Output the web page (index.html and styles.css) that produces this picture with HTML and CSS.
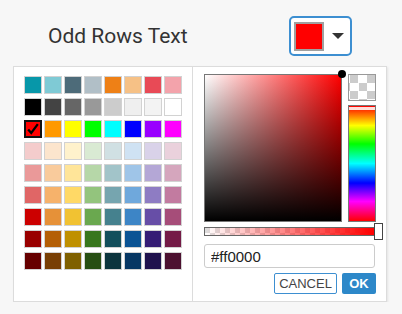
FILE: index.html
```html
<!DOCTYPE html>
<html lang="en">
<head>
    <meta charset="UTF-8">
    <meta name="viewport" content="width=device-width, initial-scale=1.0">
    <title>Color Picker</title>
    <link rel="stylesheet" href="styles.css">
</head>
<body>
    <div class="field">
        <span class="label">Odd Rows Text</span>
        <button class="picker-btn">
            <span class="current"></span>
            <span class="caret"></span>
        </button>
    </div>
    <div class="popup">
        <div class="palette" id="palette"></div>
        <div class="custom">
            <div class="editor">
                <div class="square"><span class="dot"></span></div>
                <div class="side">
                    <div class="checker"></div>
                    <div class="hue"><span class="hue-handle"></span></div>
                </div>
            </div>
            <div class="alpha"><span class="alpha-handle"></span></div>
            <input type="text" class="hex" value="#ff0000">
            <div class="actions">
                <button class="btn cancel">CANCEL</button>
                <button class="btn ok">OK</button>
            </div>
        </div>
    </div>

    <script>
        const colors = [
            "#0797a9", "#7fcad5", "#4d6b79", "#b1bfc7", "#ee8016", "#f6c186", "#e84a56", "#f3a3ab",
            "#000000", "#434343", "#666666", "#999999", "#cccccc", "#efefef", "#f3f3f3", "#ffffff",
            "#ff0000", "#ff9900", "#ffff00", "#00ff00", "#00ffff", "#0000ff", "#9900ff", "#ff00ff",
            "#f4cccc", "#fce5cd", "#fff2cc", "#d9ead3", "#d0e0e3", "#cfe2f3", "#d9d2e9", "#ead1dc",
            "#ea9999", "#f9cb9c", "#ffe599", "#b6d7a8", "#a2c4c9", "#9fc5e8", "#b4a7d6", "#d5a6bd",
            "#e06666", "#f6b26b", "#ffd966", "#93c47d", "#76a5af", "#6fa8dc", "#8e7cc3", "#c27ba0",
            "#cc0000", "#e69138", "#f1c232", "#6aa84f", "#45818e", "#3d85c6", "#674ea7", "#a64d79",
            "#990000", "#b45f06", "#bf9000", "#38761d", "#134f5c", "#0b5394", "#351c75", "#741b47",
            "#660000", "#783f04", "#7f6000", "#274e13", "#0c343d", "#073763", "#20124d", "#4c1130"
        ];
        const selected = "#ff0000";
        const palette = document.getElementById("palette");

        colors.forEach(function (c) {
            let sw = document.createElement("span");
            sw.className = "swatch";
            sw.style.background = c;
            if (c === selected) {
                sw.classList.add("selected");
                sw.innerHTML = '<svg viewBox="0 0 16 16" width="16" height="16"><path d="M2.5 8.5 L6 12.5 L13.5 2.5" fill="none" stroke="#000" stroke-width="2.6"/></svg>';
            }
            palette.appendChild(sw);
        });
    </script>
</body>
</html>
```

FILE: styles.css
```css
body {
    margin: 0;
    background: #f7f7f7;
    font-family: 'Liberation Sans', Arial, sans-serif;
}
.field {
    display: flex;
    align-items: center;
    justify-content: space-between;
    padding: 16px 50px 10px 48px;
}
.label {
    font-family: Roboto, sans-serif;
    font-size: 21px;
    color: #333;
}
.picker-btn {
    display: flex;
    align-items: center;
    width: 63px;
    height: 40px;
    padding: 0 0 0 3px;
    background: #fff;
    border: 2px solid #3d8fd1;
    border-radius: 5px;
    box-sizing: border-box;
}
.current {
    width: 30px;
    height: 29px;
    background: #f00;
    border: 2px solid #a0a0a0;
    box-sizing: border-box;
}
.caret {
    margin-left: 8px;
    border-left: 6px solid transparent;
    border-right: 6px solid transparent;
    border-top: 6px solid #333;
}
.popup {
    display: flex;
    margin-left: 13px;
    width: 374px;
    height: 236px;
    box-sizing: border-box;
    background: #fff;
    border: 1px solid #dcdcdc;
    box-shadow: 1px 1px 2px rgba(0, 0, 0, 0.08);
}
.palette {
    display: grid;
    grid-template-columns: repeat(8, 18px);
    grid-auto-rows: 18px;
    column-gap: 2px;
    row-gap: 4px;
    align-content: start;
    width: 179px;
    padding: 9px 0 0 10px;
    box-sizing: border-box;
    border-right: 1px solid #dcdcdc;
}
.swatch {
    display: flex;
    align-items: center;
    justify-content: center;
    border: 1px solid #d2d2d2;
    box-sizing: border-box;
}
.swatch.selected {
    border: 2px solid #111;
}
.custom {
    padding: 7px 0 0 11px;
}
.editor {
    display: flex;
    gap: 6px;
}
.square {
    position: relative;
    width: 138px;
    height: 148px;
    box-sizing: border-box;
    border: 1px solid #777;
    background: linear-gradient(to top, #000, rgba(0, 0, 0, 0)), linear-gradient(to right, #fff, #f00);
}
.dot {
    position: absolute;
    top: -5px;
    right: -5px;
    width: 8px;
    height: 8px;
    border-radius: 50%;
    background: #000;
}
.side {
    display: flex;
    flex-direction: column;
    gap: 4px;
    width: 28px;
}
.checker {
    height: 27px;
    box-sizing: border-box;
    border: 1px solid #999;
    background: conic-gradient(#fff 25%, #ccc 0 50%, #fff 0 75%, #ccc 0) 1px 0 / 17px 16px;
}
.hue {
    position: relative;
    height: 117px;
    box-sizing: border-box;
    border: 1px solid #777;
    background: linear-gradient(to bottom, #f00, #ff0 17%, #0f0 33%, #0ff 50%, #00f 67%, #f0f 83%, #f00);
}
.hue-handle {
    position: absolute;
    top: 1px;
    left: 0;
    right: 0;
    height: 3px;
    background: rgba(255, 255, 255, 0.85);
}
.alpha {
    position: relative;
    margin-top: 5px;
    width: 171px;
    height: 9px;
    box-sizing: border-box;
    border: 1px solid #666;
    background: linear-gradient(to right, rgba(255, 0, 0, 0), #f00),
        conic-gradient(#fff 25%, #ddd 0 50%, #fff 0 75%, #ddd 0) 0 0 / 10px 10px;
}
.alpha-handle {
    position: absolute;
    top: -5px;
    left: 169px;
    width: 7px;
    height: 15px;
    background: #fff;
    border: 1px solid #444;
}
.hex {
    display: block;
    margin-top: 8px;
    width: 171px;
    height: 24px;
    box-sizing: border-box;
    padding: 0 6px;
    border: 1px solid #ccc;
    border-radius: 3px;
    font-family: 'Liberation Sans', Arial, sans-serif;
    font-size: 15px;
    color: #222;
    outline: none;
}
.actions {
    display: flex;
    justify-content: flex-end;
    gap: 5px;
    margin-top: 5px;
    width: 172px;
}
.btn {
    height: 21px;
    padding: 0;
    font-family: 'Liberation Sans', Arial, sans-serif;
    font-size: 13px;
    border-radius: 2px;
    box-sizing: border-box;
}
.cancel {
    width: 63px;
    background: #fff;
    color: #444;
    border: 1px solid #3d8fd1;
}
.ok {
    width: 34px;
    background: #2d88c9;
    color: #fff;
    border: none;
    font-weight: bold;
}
```
